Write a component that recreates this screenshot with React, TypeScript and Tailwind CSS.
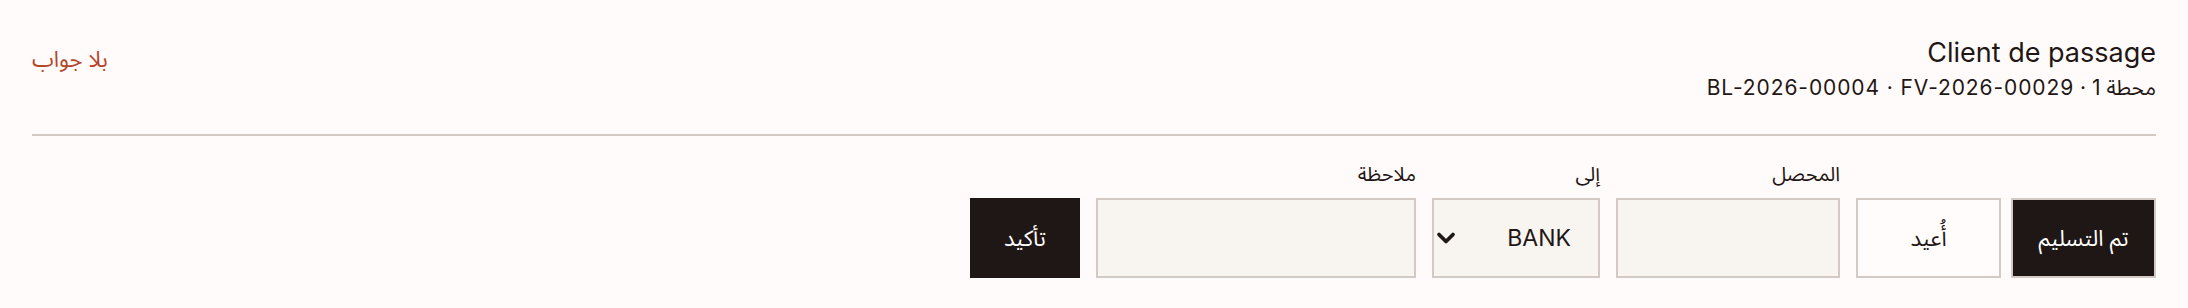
import { ChevronDown } from "lucide-react";

const font = "font-['Inter','Noto_Sans_Arabic','Noto_Sans','DejaVu_Sans',sans-serif]";

function Field({ label, children }: { label: string; children: React.ReactNode }) {
  return (
    <label className="flex flex-col gap-3">
      <span className="text-[20px] leading-6 text-[#1f1715]">{label}</span>
      {children}
    </label>
  );
}

export default function App() {
  return (
    <div dir="rtl" className={`${font} min-h-[308px] bg-[#fffbfa] px-8 text-[#1f1715]`}>
      {/* Header: client + refs, status on the far side */}
      <header className="flex items-start justify-between border-b-2 border-[#d3cac5] pb-8 pt-9">
        <div className="flex flex-col">
          <h1 className="text-[27px] font-normal leading-[34px]">Client de passage</h1>
          <p className="mt-1 text-[21px] leading-7 tracking-[0.9px]">
            <span>محطة 1</span> · <bdi>FV-2026-00029</bdi> · <bdi>BL-2026-00004</bdi>
          </p>
        </div>
        <span className="mt-[9px] text-[22px] leading-7 text-[#b4462b]">بلا جواب</span>
      </header>

      {/* Delivery outcome form */}
      <form className="flex items-end gap-4 pb-[30px] pt-[26px]">
        <div className="flex gap-[10px]">
          <button
            type="button"
            className="h-20 w-[145px] border-2 border-[#d3cac5] bg-[#1f1715] text-[22px] text-white"
          >
            تم التسليم
          </button>
          <button
            type="button"
            className="h-20 w-[145px] border-2 border-[#d3cac5] bg-[#fffcfb] text-[22px]"
          >
            أُعيد
          </button>
        </div>

        <Field label="المحصل">
          <input className="h-20 w-[224px] border-2 border-[#d3cac5] bg-[#f8f5f0] px-4 text-[20px] outline-none" />
        </Field>

        <Field label="إلى">
          <div className="relative">
            <select
              defaultValue="BANK"
              className="h-20 w-[168px] appearance-none border-2 border-[#d3cac5] bg-[#f8f5f0] pl-10 pr-[27px] text-[23px] outline-none"
            >
              <option>BANK</option>
              <option>CAISSE</option>
            </select>
            <ChevronDown
              size={28}
              strokeWidth={3.2}
              className="pointer-events-none absolute left-0 top-1/2 -translate-y-1/2 text-[#1f1715]"
            />
          </div>
        </Field>

        <Field label="ملاحظة">
          <input className="h-20 w-[320px] border-2 border-[#d3cac5] bg-[#f8f5f0] px-4 text-[20px] outline-none" />
        </Field>

        <button type="submit" className="h-20 w-[110px] bg-[#1f1715] text-[22px] text-white">
          تأكيد
        </button>
      </form>
    </div>
  );
}
